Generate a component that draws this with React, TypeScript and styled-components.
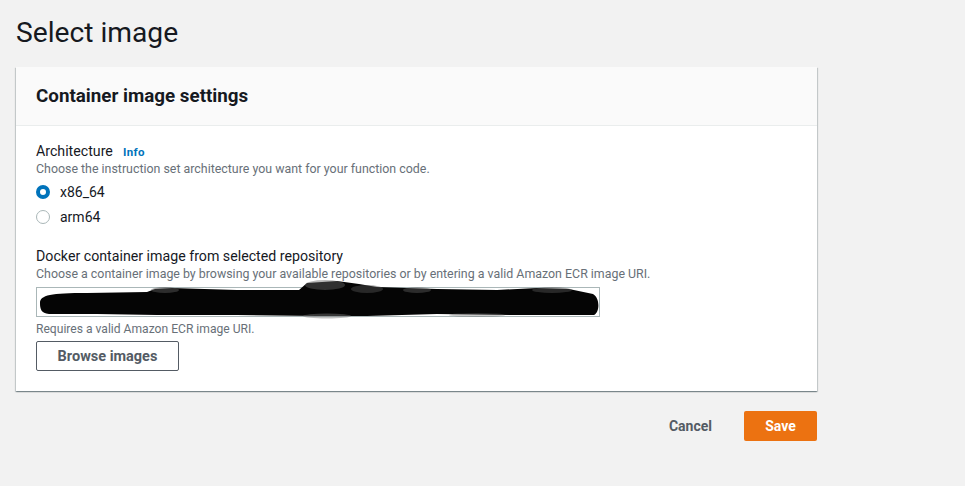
import React from "react";
import styled, { createGlobalStyle } from "styled-components";

const Global = createGlobalStyle`
  html, body { margin: 0; padding: 0; background: #f2f2f2; }
  body { font-family: Roboto, "Liberation Sans", Arial, sans-serif; color: #16191f; }
  * { box-sizing: border-box; }
`;

const Page = styled.div`
  width: 965px;
  height: 486px;
  background: #f2f2f2;
  padding: 15px 148px 0 16px;
`;

const Title = styled.h1`
  margin: 0;
  font-size: 28.2px;
  font-weight: 400;
  line-height: 36px;
  color: #16191f;
  height: 52px;
`;

const Card = styled.section`
  background: #fff;
  box-shadow: 0 1px 1px 0 rgba(0, 28, 36, 0.3), 1px 1px 1px 0 rgba(0, 28, 36, 0.15),
    -1px 1px 1px 0 rgba(0, 28, 36, 0.15);
`;

const CardHeader = styled.div`
  height: 59px;
  background: #fafafa;
  border-bottom: 1px solid #eaeded;
  padding: 0 20px;
  display: flex;
  align-items: center;
`;

const CardTitle = styled.h2`
  margin: 0;
  font-size: 18.8px;
  font-weight: 700;
  color: #16191f;
`;

const CardBody = styled.div`
  padding: 15px 20px 20px;
  display: flex;
  flex-direction: column;
`;

const Field = styled.div<{ $gap?: number }>`
  display: flex;
  flex-direction: column;
  margin-bottom: ${(p) => p.$gap ?? 0}px;
`;

const LabelRow = styled.div`
  display: flex;
  align-items: baseline;
  gap: 10px;
  height: 20px;
`;

const Label = styled.span`
  font-size: 14.2px;
  line-height: 20px;
  color: #16191f;
`;

const InfoLink = styled.a`
  font-size: 11.5px;
  font-weight: 700;
  letter-spacing: 0.4px;
  color: #0073bb;
  text-decoration: none;
`;

const Desc = styled.div`
  font-size: 12.4px;
  line-height: 16px;
  color: #687078;
`;

const RadioRow = styled.label`
  display: flex;
  align-items: center;
  gap: 10px;
  height: 25px;
  font-size: 14px;
  color: #16191f;
`;

const RadioDot = styled.span<{ $checked?: boolean }>`
  width: 14px;
  height: 14px;
  border-radius: 50%;
  border: ${(p) => (p.$checked ? "4px solid #0073bb" : "1px solid #aab7b8")};
  background: #fff;
`;

const RadioGroup = styled.div`
  display: flex;
  flex-direction: column;
  margin-top: 2px;
`;

const InputBox = styled.div`
  margin-top: 5px;
  width: 564px;
  height: 30px;
  border: 1px solid #aab7b8;
  background: #fff;
  position: relative;
`;

const Scribble = styled.svg`
  position: absolute;
  left: 0;
  top: 0;
  overflow: visible;
`;

const Hint = styled.div`
  margin-top: 4px;
  font-size: 12.1px;
  line-height: 16px;
  color: #687078;
`;

const SecondaryButton = styled.button`
  margin-top: 4px;
  align-self: flex-start;
  width: 143px;
  height: 30px;
  border: 1px solid #545b64;
  border-radius: 2px;
  background: #fff;
  font-family: inherit;
  font-size: 14.5px;
  font-weight: 700;
  color: #545b64;
`;

const Footer = styled.div`
  display: flex;
  justify-content: flex-end;
  align-items: center;
  gap: 14px;
  margin-top: 20px;
`;

const LinkButton = styled.button`
  border: none;
  background: transparent;
  font-family: inherit;
  font-size: 14px;
  font-weight: 700;
  color: #545b64;
  padding: 0 18px;
  height: 30px;
`;

const PrimaryButton = styled.button`
  width: 73px;
  height: 30px;
  border: none;
  border-radius: 2px;
  background: #ec7211;
  color: #fff;
  font-family: inherit;
  font-size: 14px;
  font-weight: 700;
`;

function Redaction() {
  return (
    <Scribble width="564" height="30" viewBox="0 0 564 30">
      <path
        d="M3 15 C 3 7, 14 5, 50 5 L 110 4 L 118 1 L 135 0 L 200 2 L 262 2 L 270 -5 L 300 -7 L 322 -4 L 340 -1 L 400 1 L 460 2 L 500 0 L 532 1 L 556 6 C 563 10, 563 24, 557 27 L 480 27 L 400 26 L 330 28 L 280 28 L 200 27 L 120 27 L 60 26 L 12 26 C 4 25, 3 21, 3 15 Z"
        fill="#050505"
      />
      <ellipse cx="128" cy="2" rx="14" ry="3" fill="#555" opacity="0.5" />
      <ellipse cx="288" cy="-3" rx="20" ry="5" fill="#666" opacity="0.45" />
      <ellipse cx="330" cy="1" rx="16" ry="4" fill="#555" opacity="0.45" />
      <ellipse cx="380" cy="2" rx="14" ry="3" fill="#666" opacity="0.4" />
      <ellipse cx="515" cy="2" rx="20" ry="3" fill="#555" opacity="0.45" />
      <ellipse cx="290" cy="28" rx="24" ry="2.5" fill="#777" opacity="0.45" />
      <ellipse cx="440" cy="27" rx="28" ry="2" fill="#666" opacity="0.35" />
    </Scribble>
  );
}

export default function App() {
  return (
    <Page>
      <Global />
      <Title>Select image</Title>
      <Card>
        <CardHeader>
          <CardTitle>Container image settings</CardTitle>
        </CardHeader>
        <CardBody>
          <Field $gap={17}>
            <LabelRow>
              <Label>Architecture</Label>
              <InfoLink href="#">Info</InfoLink>
            </LabelRow>
            <Desc>Choose the instruction set architecture you want for your function code.</Desc>
            <RadioGroup>
              <RadioRow>
                <RadioDot $checked />
                x86_64
              </RadioRow>
              <RadioRow>
                <RadioDot />
                arm64
              </RadioRow>
            </RadioGroup>
          </Field>
          <Field>
            <Label>Docker container image from selected repository</Label>
            <Desc>
              Choose a container image by browsing your available repositories or by entering a valid Amazon ECR image URI.
            </Desc>
            <InputBox>
              <Redaction />
            </InputBox>
            <Hint>Requires a valid Amazon ECR image URI.</Hint>
            <SecondaryButton>Browse images</SecondaryButton>
          </Field>
        </CardBody>
      </Card>
      <Footer>
        <LinkButton>Cancel</LinkButton>
        <PrimaryButton>Save</PrimaryButton>
      </Footer>
    </Page>
  );
}
